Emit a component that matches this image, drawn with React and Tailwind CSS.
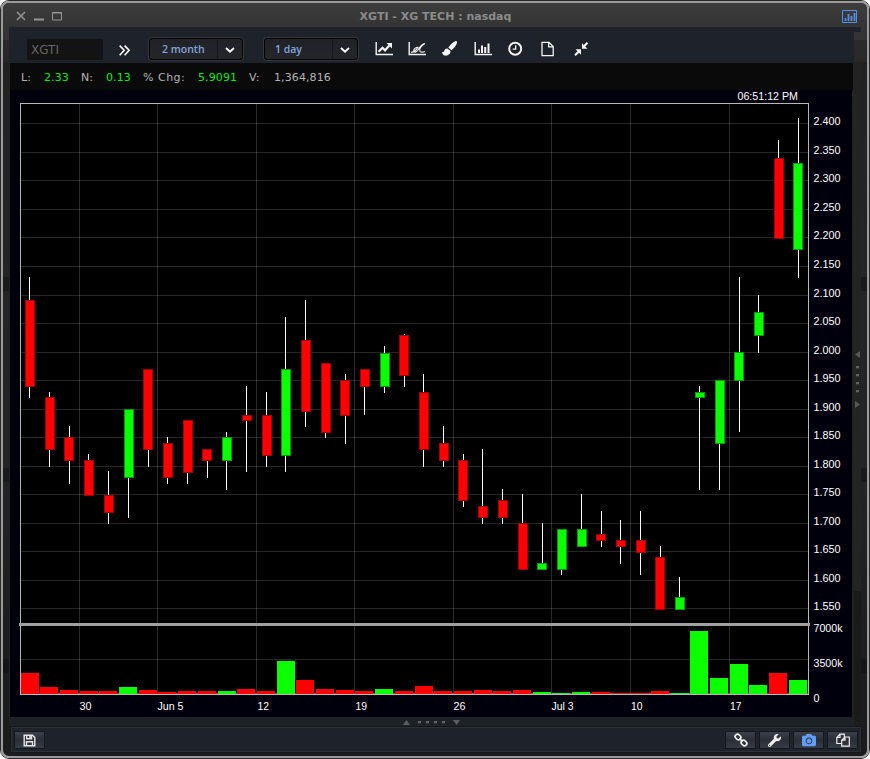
import React from 'react';
import { FaWrench, FaCamera } from 'react-icons/fa';

// [ bodyX, wickX, wickTop, bodyTop, bodyBottom, wickBottom, up, volumeTop ]
const CANDLES = [
	[ 25, 29, 277, 300, 387, 398, 0, 673 ],
	[ 45, 49, 392, 397, 450, 467, 0, 687 ],
	[ 64, 69, 426, 437, 461, 484, 0, 690 ],
	[ 84, 88, 454, 460, 496, 496, 0, 691 ],
	[ 104, 108, 471, 495, 513, 524, 0, 691 ],
	[ 124, 128, 409, 409, 478, 518, 1, 687 ],
	[ 143, 148, 369, 369, 450, 467, 0, 690 ],
	[ 163, 167, 437, 443, 478, 484, 0, 692 ],
	[ 183, 187, 420, 420, 473, 484, 0, 691 ],
	[ 202, 207, 449, 449, 461, 478, 0, 691 ],
	[ 222, 226, 432, 437, 461, 490, 1, 691 ],
	[ 242, 246, 386, 415, 421, 472, 0, 689 ],
	[ 262, 266, 392, 415, 456, 467, 0, 691 ],
	[ 281, 285, 317, 369, 456, 472, 1, 661 ],
	[ 301, 305, 300, 340, 412, 427, 0, 680 ],
	[ 321, 325, 363, 363, 433, 438, 0, 689 ],
	[ 340, 345, 374, 380, 416, 444, 0, 690 ],
	[ 360, 364, 369, 369, 387, 415, 0, 691 ],
	[ 380, 384, 346, 353, 387, 393, 1, 689 ],
	[ 399, 404, 334, 335, 376, 387, 0, 691 ],
	[ 419, 423, 374, 392, 450, 467, 0, 686 ],
	[ 439, 443, 426, 443, 461, 467, 0, 691 ],
	[ 458, 463, 454, 460, 501, 507, 0, 691 ],
	[ 478, 482, 449, 506, 518, 524, 0, 690 ],
	[ 498, 502, 489, 500, 518, 524, 0, 691 ],
	[ 518, 522, 494, 523, 570, 570, 0, 690 ],
	[ 537, 542, 523, 563, 570, 570, 1, 692 ],
	[ 557, 561, 529, 529, 570, 575, 1, 693 ],
	[ 577, 581, 494, 529, 547, 547, 1, 692 ],
	[ 596, 601, 511, 534, 541, 547, 0, 692 ],
	[ 616, 620, 520, 540, 547, 564, 0, 693 ],
	[ 636, 640, 511, 540, 553, 575, 0, 693 ],
	[ 655, 660, 546, 557, 610, 610, 0, 691 ],
	[ 675, 679, 577, 597, 610, 610, 1, 693 ],
	[ 695, 699, 386, 392, 398, 490, 1, 631 ],
	[ 715, 719, 380, 380, 444, 490, 1, 678 ],
	[ 734, 739, 277, 352, 381, 432, 1, 664 ],
	[ 754, 758, 295, 312, 336, 353, 1, 685 ],
	[ 774, 778, 140, 158, 239, 239, 0, 673 ],
	[ 793, 798, 118, 163, 250, 278, 1, 680 ],
];

const PRICES = [
	[ 123, '2.400' ],
	[ 152, '2.350' ],
	[ 180, '2.300' ],
	[ 209, '2.250' ],
	[ 237, '2.200' ],
	[ 266, '2.150' ],
	[ 295, '2.100' ],
	[ 323, '2.050' ],
	[ 352, '2.000' ],
	[ 380, '1.950' ],
	[ 409, '1.900' ],
	[ 437, '1.850' ],
	[ 466, '1.800' ],
	[ 494, '1.750' ],
	[ 523, '1.700' ],
	[ 551, '1.650' ],
	[ 580, '1.600' ],
	[ 608, '1.550' ],
];

// [ gridX, labelX, label, labelWidth ]
const DATES = [
	[ 79, 79.5, '30', 12 ],
	[ 157, 157.5, 'Jun 5', 26 ],
	[ 256, 257.5, '12', 11.5 ],
	[ 354, 355.5, '19', 11.5 ],
	[ 453, 453.5, '26', 12 ],
	[ 551, 551.5, 'Jul 3', 22 ],
	[ 630, 631, '10', 11.5 ],
	[ 729, 730, '17', 11.5 ],
];

function Chart() {
	return (
		<svg
			width="842"
			height="627"
			viewBox="10 90 842 627"
			className="block bg-[#00000c]"
			fontFamily='"Liberation Sans", Arial, sans-serif'
			fontSize="10"
			fill="#fff"
		>
			<g shapeRendering="crispEdges">
				<rect x="20" y="103" width="789" height="592" fill="#b8b8b8" />
				<rect x="21" y="104" width="787" height="590" fill="#000" />
				<g fill="#262626">
					{ PRICES.map( ( [ y ] ) => (
						<rect key={ y } x="21" y={ y } width="787" height="1" />
					) ) }
					<rect x="21" y="659" width="787" height="1" />
				</g>
				<g fill="#fff" fillOpacity="0.17">
					{ DATES.map( ( [ x ] ) => (
						<rect key={ x } x={ x } y="104" width="1" height="590" />
					) ) }
				</g>
				<rect x="21" y="693" width="787" height="1" fill="#d03030" />
				{ CANDLES.map( ( c, i ) => {
					const [ x, wx, high, top, bottom, low, up, vol ] = c;
					return (
						<g key={ x }>
							<rect x={ wx } y={ high } width="1" height={ low - high } fill="#fff" />
							<rect
								x={ x }
								y={ top }
								width="10"
								height={ bottom - top }
								fill={ up ? '#009c00' : '#a00000' }
							/>
							<rect
								x={ x + 1 }
								y={ top + 1 }
								width="8"
								height={ bottom - top - 2 }
								fill={ up ? '#0aff00' : '#ff0000' }
							/>
							<rect
								x={ Math.floor( 21 + i * 19.7 ) }
								y={ vol }
								width="18"
								height={ 694 - vol }
								fill={ up ? '#0aff00' : '#ff0000' }
							/>
						</g>
					);
				} ) }
				<rect x="19" y="623" width="791" height="3" fill="#a0a0a0" />
			</g>
			<text x="737.5" y="100" fontSize="11" textLength="60.5" lengthAdjust="spacingAndGlyphs">
				06:51:12 PM
			</text>
			{ PRICES.map( ( [ y, label ] ) => (
				<text key={ y } x="813.5" y={ y + 2 } textLength="27" lengthAdjust="spacingAndGlyphs">
					{ label }
				</text>
			) ) }
			<text x="813.5" y="632" textLength="29" lengthAdjust="spacingAndGlyphs">7000k</text>
			<text x="813.5" y="667" textLength="29" lengthAdjust="spacingAndGlyphs">3500k</text>
			<text x="813.5" y="702" textLength="6" lengthAdjust="spacingAndGlyphs">0</text>
			{ DATES.map( ( [ x, lx, label, w ] ) => (
				<text key={ x } x={ lx } y="710" textLength={ w } lengthAdjust="spacingAndGlyphs">
					{ label }
				</text>
			) ) }
		</svg>
	);
}

function Select( { label, className } ) {
	return (
		<div
			className={ `flex h-[22px] w-[94px] items-center rounded-[3px] border border-black bg-gradient-to-b from-[#202228] to-[#25262a] shadow-[0_0_0_1px_#33373e] ${ className }` }
		>
			<span className="flex-1 font-['Open_Sans',sans-serif] text-[10.5px] leading-5 font-semibold text-[#84a5dc]">
				{ label }
			</span>
			<span className="flex h-5 w-[25px] items-center justify-center border-l border-[#15171b] pt-px">
				<svg width="10" height="6" viewBox="0 0 10 6" fill="none" stroke="#fff" strokeWidth="1.9">
					<path d="M1 1l4 3.7L9 1" />
				</svg>
			</span>
		</div>
	);
}

function ToolIcon( { children } ) {
	return (
		<svg
			width="18"
			height="16"
			viewBox="0 0 18 16"
			fill="none"
			stroke="#f4f4f4"
			strokeWidth="1.4"
			className="block"
		>
			{ children }
		</svg>
	);
}

function Toolbar() {
	return (
		<div className="flex h-[31px] items-start bg-[#1e222a]">
			<div className="mt-[7px] ml-[18px] h-[21px] w-[76px] bg-[#131313] pl-1 font-['DejaVu_Sans',sans-serif] text-[12px] leading-[22px] text-[#656565]">
				XGTI
			</div>
			<svg width="11" height="11" viewBox="0 0 11 11" fill="none" stroke="#fff" strokeWidth="1.6" className="mt-[13px] ml-[16px]">
				<path d="M.7.6l4.5 4.7-4.5 4.9M5.6.6l4.5 4.7-4.5 4.9" />
			</svg>
			<Select label="2 month" className="mt-[6px] ml-[19px] pl-3" />
			<Select label="1 day" className="mt-[6px] ml-[21px] pl-[10px]" />
			<div className="mt-[9px] ml-[17px] flex gap-[15px]">
				<ToolIcon>
					<path d="M1.2 1v12.5H18" />
					<path d="M3.5 10.8l4-4 2.5 2.5 5-5.5" strokeWidth="2.2" />
					<path d="M11.5 2H17v5.500z" fill="#f4f4f4" stroke="none" />
				</ToolIcon>
				<ToolIcon>
					<path d="M1.2 1v12.5H18" />
					<path d="M3 11.300c3.500-.3 5.500-2.300 6.500-4.500M10.500 6.500C8.500 5.500 5.500 8 5.700 10c.2 1.500 2.500 1.500 4-.5 1.500-2.200 3-6.500 7.300-7M16.500 3C13.500 4.500 10.500 8 12 10.300c1 1.200 3 .9 5 .2" strokeWidth="1.200" />
				</ToolIcon>
				<ToolIcon>
					<g fill="#f4f4f4" stroke="none">
						<path d="M14.200.2c1.300-.5 2.300.4 1.800 1.800-.9 2.500-3.200 5.500-5.600 7.300L7.300 6.500C9 4 11.800 1.200 14.200.2z" />
						<path d="M6.500 7.400l3 2.700c.3 3-2.700 5-5.500 4.500C2 14.300 1.200 12.500 1 10.700c1.500.8 2 .2 2.300-1 .5-1.500 1.700-2.400 3.200-2.300z" />
					</g>
				</ToolIcon>
				<ToolIcon>
					<path d="M1.2 1v12.500H18" />
					<path d="M5 12V8.500M8 12V4.500M11.200 12V6M14.500 12V2.500" strokeWidth="2" />
				</ToolIcon>
				<ToolIcon>
					<circle cx="8.200" cy="7.700" r="6" strokeWidth="2" />
					<path d="M8.700 4.200v4H5.700" strokeWidth="1.300" />
				</ToolIcon>
				<ToolIcon>
					<path d="M2 1.300h7l4.200 4.200v9.200H2zM8.700 1.300v4.500h4.500" strokeWidth="1.300" />
				</ToolIcon>
				<ToolIcon>
					<path d="M2 14.300L5.500 10.800M14.500 1.800L11 5.300" strokeWidth="2.200" />
					<path d="M2.500 8.300H8v5.500zM9 2.300v5.500h5.500z" fill="#f4f4f4" stroke="none" />
				</ToolIcon>
			</div>
		</div>
	);
}

function Quote() {
	return (
		<div className="ml-px flex h-[27px] w-[843px] bg-[#0a0a0a] pl-[11px] font-['DejaVu_Sans',sans-serif] text-[11px] leading-[29px] tracking-[0.1px] whitespace-pre text-[#b4b4b4]">
			<span className="w-[23px]">L:</span>
			<span className="w-[37px] text-[#0bea0b]">2.33</span>
			<span className="w-[25px]">N:</span>
			<span className="w-[37px] text-[#0bea0b]">0.13</span>
			<span className="w-[55px] tracking-[0.5px]">% Chg:</span>
			<span className="w-[51px] text-[#0bea0b]">5.9091</span>
			<span className="w-[25px]">V:</span>
			<span>1,364,816</span>
		</div>
	);
}

function Dots( { vertical } ) {
	return [ 0, 1, 2, 3 ].map( ( n ) => (
		<i
			key={ n }
			className={ `block size-[3px] border-b border-[#38383c] bg-[#606266] ${ vertical ? 'mb-[5px]' : 'mr-[5px]' }` }
		/>
	) );
}

function FooterButton( { children } ) {
	return (
		<button
			type="button"
			className="flex h-[18px] w-[31px] items-center justify-center border border-[#15171c] bg-gradient-to-b from-[#3b404a] via-[#2a2e37] via-50% to-[#383c46] shadow-[0_0_0_1px_#20242b] text-[#eee]"
		>
			{ children }
		</button>
	);
}

function Footer() {
	return (
		<div className="ml-[7px] flex h-[27px] w-[852px] items-center border border-[#15171b] bg-[#1e222a] px-[3px] pt-px shadow-[inset_0_0_0_1px_#2b3039]">
			<FooterButton>
				<svg width="13" height="13" viewBox="0 0 13 13" fill="none" stroke="#e6e6e6" strokeWidth="1.400">
					<path d="M1.200 1.200h8.300l2.300 2.300v8.300H1.200z" />
					<path d="M3.500 11.500V7.800h6v3.700M3.700 1.500v3.200h4.800V1.500" />
					<path d="M7 1.500v2.500" strokeWidth="1.600" />
				</svg>
			</FooterButton>
			<div className="ml-auto flex gap-[3px]">
				<FooterButton>
					<svg width="14" height="14" viewBox="0 0 14 14" fill="none" stroke="#f2f2f2" strokeWidth="1.700">
						<rect x="-2.900" y="-2.300" width="5.800" height="4.600" rx="2" transform="translate(4 4) rotate(45)" />
						<rect x="-2.900" y="-2.300" width="5.800" height="4.600" rx="2" transform="translate(10 10) rotate(45)" />
						<path d="M5.500 5.500l3 3" />
					</svg>
				</FooterButton>
				<FooterButton>
					<FaWrench size={ 13 } />
				</FooterButton>
				<FooterButton>
					<FaCamera size={ 14 } className="text-[#619cf8]" />
				</FooterButton>
				<FooterButton>
					<svg width="14" height="14" viewBox="0 0 14 14" fill="none" stroke="#eee" strokeWidth="1.200">
						<path d="M5.500 10.500H.8V4.500L4 1.200h4.300v3M4 1.200v3.300H.8" />
						<path d="M5.700 7.200L9 4h4.300v9.200H5.700zM9 4v3.200H5.700" />
					</svg>
				</FooterButton>
			</div>
		</div>
	);
}

export default function App() {
	return (
		<div className="h-[759px] w-[870px] overflow-hidden bg-white">
			<div className="h-[759px] w-[870px] rounded-[9px] border border-[#29282a]">
				<div className="flex h-[757px] w-[868px] flex-col overflow-hidden rounded-[8px] border-2 border-[#9c9a9a] bg-[#1b1c1e]">
					<div className="flex h-6 shrink-0 items-center bg-gradient-to-b from-[#3d3d3d] to-[#343434]">
						<svg width="47" height="12" viewBox="0 0 47 12" fill="none" stroke="#959595" className="mt-px ml-[13px] shrink-0">
							<path d="M1 2l8 8M9 2L1 10" strokeWidth="1.500" />
							<path d="M18 9.500h10" strokeWidth="2" />
							<path d="M36.500 2.500h9v7.500h-9z" />
							<path d="M36 3h10" />
						</svg>
						<div className="flex-1 pt-[3px] pr-[34px] text-center font-['DejaVu_Sans',sans-serif] text-[11px] leading-6 font-bold text-[#8b8b8b]">
							XGTI - XG TECH : nasdaq
						</div>
						<svg width="15" height="13" viewBox="0 0 15 13" fill="none" stroke="#5590e8" className="mt-[3px] mr-[10px] shrink-0">
							<path d="M.5.5h14v12H.5z" />
							<path d="M3.500 11V8M6.500 11V4M9.500 11V6M12.500 11V3" strokeWidth="1.800" />
						</svg>
					</div>
					<div className="flex h-[5px] shrink-0 bg-[#353535] pl-[6px]">
						<div className="h-full w-[852px] bg-[#1e222a]" />
					</div>
					<div className="flex h-[685px] shrink-0">
						<div className="w-[6px] bg-[linear-gradient(#343434_8px,#292929_8px,#262626_30px,#212121_31px,#252525_245px,#191919_245px,#191919_259px,#252525_259px,#242424_436px,#191919_436px,#191919_450px,#232323_450px,#1d1d1d_627px,#151515_627px,#151515_641px,#1c1c1c_641px)]" />
						<div className="w-[845px] bg-[linear-gradient(#1e222a_31px,#222222_31px)]">
							<Toolbar />
							<Quote />
							<div className="ml-px">
								<Chart />
							</div>
						</div>
						<div className="flex w-[7px] flex-col items-center bg-[linear-gradient(#343434_8px,#2a2a2a_8px,#292929_30px,#232323_30px,#242424_559px,#1a1a1a_559px)] pt-[319px]">
							<svg width="5" height="7" viewBox="0 0 5 7" fill="#58595b" className="mb-[8px] shrink-0">
								<path d="M5 0v7L0 3.500z" />
							</svg>
							<Dots vertical />
							<svg width="5" height="7" viewBox="0 0 5 7" fill="#58595b" className="mt-[3px] shrink-0">
								<path d="M0 0v7l5-3.500z" />
							</svg>
						</div>
						<div className="w-[6px] bg-[linear-gradient(#343434_8px,#2a2a2a_8px,#292929_30px,#212121_30px,#252525_245px,#191919_245px,#191919_259px,#252525_259px,#242424_436px,#191919_436px,#191919_450px,#232323_450px,#1d1d1d_627px,#151515_627px,#151515_641px,#1c1c1c_641px)]" />
					</div>
					<div className="ml-[6px] flex h-[9px] w-[845px] shrink-0 items-center justify-center bg-[#1d2226] pt-px">
						<svg width="7" height="5" viewBox="0 0 7 5" fill="#5c5f62" className="mr-[8px]">
							<path d="M0 5h7L3.500 0z" />
						</svg>
						<Dots />
						<svg width="7" height="5" viewBox="0 0 7 5" fill="#5c5f62" className="ml-[3px]">
							<path d="M0 0h7L3.500 5z" />
						</svg>
					</div>
					<Footer />
				</div>
			</div>
		</div>
	);
}
